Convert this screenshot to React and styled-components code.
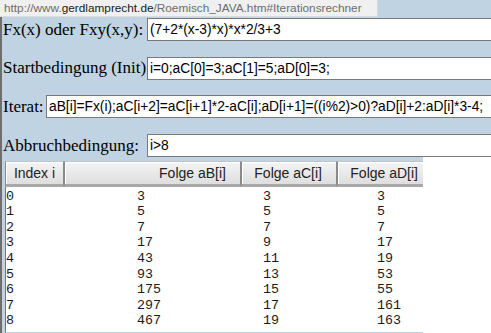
import React from 'react';
import styled, { createGlobalStyle } from 'styled-components';

const ROWS = [
  [0, 3, 3, 3],
  [1, 5, 5, 5],
  [2, 7, 7, 7],
  [3, 17, 9, 17],
  [4, 43, 11, 19],
  [5, 93, 13, 53],
  [6, 175, 15, 55],
  [7, 297, 17, 161],
  [8, 467, 19, 163],
];

const FIELDS = [
  { label: 'Fx(x) oder Fxy(x,y):', width: 144, value: '(7+2*(x-3)*x)*x*2/3+3' },
  { label: 'Startbedingung (Init)', width: 144, value: 'i=0;aC[0]=3;aC[1]=5;aD[0]=3;' },
  { label: 'Iterat:', width: 43, value: 'aB[i]=Fx(i);aC[i+2]=aC[i+1]*2-aC[i];aD[i+1]=((i%2)>0)?aD[i]+2:aD[i]*3-4;' },
  { label: 'Abbruchbedingung:', width: 144, value: 'i>8' },
];

const HEADERS = ['Index i', 'Folge aB[i]', 'Folge aC[i]', 'Folge aD[i]'];

const App = () => (
  <>
    <GlobalStyle />
    <Page>
      <StatusUrl>
        <Dim>http://www.</Dim>
        <Host>gerdlamprecht.de</Host>
        <Dim>/Roemisch_JAVA.htm#Iterationsrechner</Dim>
      </StatusUrl>

      <Form>
        {FIELDS.map(f => (
          <Row key={f.label}>
            <Label $width={f.width}>{f.label}</Label>
            <Field value={f.value} readOnly />
          </Row>
        ))}
      </Form>

      <Results>
        <Table>
          <HeaderRow>
            {HEADERS.map((h, i) => (
              <HeaderCell key={h} $center={i === 0}>{h}</HeaderCell>
            ))}
          </HeaderRow>
          <Body>
            {ROWS.map(r => (
              <DataRow key={r[0]}>
                {r.map((v, i) => <span key={i}>{v}</span>)}
              </DataRow>
            ))}
          </Body>
        </Table>
        <Filler />
      </Results>
    </Page>
  </>
);

// ─── Styles ──────────────────────────────────────────────────────────────────

const GlobalStyle = createGlobalStyle`
  html, body {
    margin: 0;
    padding: 0;
    background: #bfd3e2;
    overflow: hidden;
  }
`;

const Page = styled.div`
  position: relative;
  width: 491px;
  height: 333px;
  box-sizing: border-box;
  border-left: 2px solid #6e6e6e;
  padding: 18px 0 0 1px;
  display: flex;
  flex-direction: column;
`;

const StatusUrl = styled.div`
  position: absolute;
  top: 0;
  left: -2px;
  width: 378px;
  height: 17px;
  box-sizing: border-box;
  padding: 1px 0 0 4px;
  background: #f0f0f0;
  border-right: 1px solid #d6d6d6;
  border-bottom: 1px solid #dcdcdc;
  font-family: 'Liberation Sans', Arial, sans-serif;
  font-size: 11.8px;
  line-height: 15px;
  white-space: nowrap;
  overflow: hidden;
`;

const Dim = styled.span`
  color: #6d6d6d;
`;

const Host = styled.span`
  color: #1a1a1a;
`;

const Form = styled.div`
  display: flex;
  flex-direction: column;
  gap: 15.7px;
`;

const Row = styled.div`
  display: flex;
  align-items: center;
  height: 23px;
`;

const Label = styled.span`
  width: ${p => p.$width}px;
  flex-shrink: 0;
  font-family: 'Liberation Serif', 'Times New Roman', serif;
  font-size: 17px;
  color: #000;
  white-space: nowrap;
`;

const Field = styled.input`
  flex: 1;
  min-width: 0;
  height: 23px;
  box-sizing: border-box;
  margin: 0;
  padding: 0 2px;
  border: 1px solid #7a7a7a;
  border-right: none;
  background: #fff;
  font-family: 'Liberation Sans', Arial, sans-serif;
  font-size: 13.8px;
  letter-spacing: -0.02px;
  color: #000;
  outline: none;
`;

const Results = styled.div`
  flex: 1;
  display: flex;
  padding-left: 2px;
  min-height: 0;
`;

const Table = styled.div`
  width: 418px;
  display: flex;
  flex-direction: column;
  padding-top: 4px;
  overflow: hidden;
`;

const HeaderRow = styled.div`
  display: grid;
  grid-template-columns: 59px 177px 96px 96px;
  height: 26px;
  flex-shrink: 0;
`;

const HeaderCell = styled.div`
  display: flex;
  align-items: center;
  justify-content: ${p => (p.$center ? 'center' : 'flex-end')};
  padding-right: ${p => (p.$center ? 0 : 14)}px;
  box-sizing: border-box;
  background: linear-gradient(#f4f4f4, #dedede);
  border-top: 1px solid #c4c4c4;
  border-left: 1px solid #8a8a8a;
  border-right: 1px solid #8a8a8a;
  border-bottom: 3px solid #a8a8a8;
  box-shadow: inset 1px 1px 0 #fff;
  font-family: 'Liberation Sans', Arial, sans-serif;
  font-size: 14px;
  color: #222;
  white-space: nowrap;
`;

const Body = styled.div`
  flex: 1;
  background: #fff;
  border-left: 1px solid #777;
  border-bottom: 1px solid #b6cde0;
  padding-top: 1.5px;
`;

const DataRow = styled.div`
  display: grid;
  grid-template-columns: 131px 126px 114px 1fr;
  font-family: 'Liberation Mono', 'Courier New', monospace;
  font-size: 13.33px;
  line-height: 15.6px;
  color: #1a1a1a;
`;

const Filler = styled.div`
  flex: 1;
  background: #fff;
`;

export default App;
